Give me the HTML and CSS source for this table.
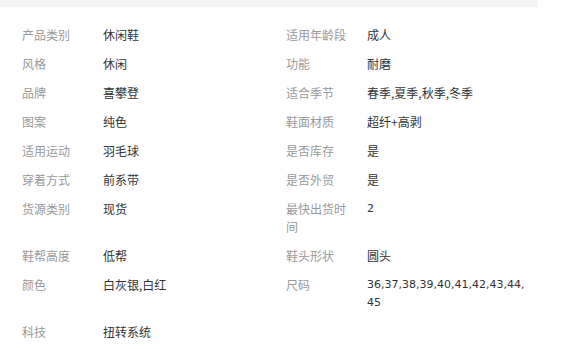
FILE: index.html
```html
<!DOCTYPE html>
<html lang="zh-CN">
<head>
<meta charset="utf-8">
<title>产品参数</title>
<link rel="stylesheet" href="styles.css">
</head>
<body>
<div class="topbar"></div>
<ul class="attrs">
  <li class="item"><span class="label">产品类别</span><span class="value">休闲鞋</span></li>
  <li class="item"><span class="label">适用年龄段</span><span class="value">成人</span></li>
  <li class="item"><span class="label">风格</span><span class="value">休闲</span></li>
  <li class="item"><span class="label">功能</span><span class="value">耐磨</span></li>
  <li class="item"><span class="label">品牌</span><span class="value">喜攀登</span></li>
  <li class="item"><span class="label">适合季节</span><span class="value">春季,夏季,秋季,冬季</span></li>
  <li class="item"><span class="label">图案</span><span class="value">纯色</span></li>
  <li class="item"><span class="label">鞋面材质</span><span class="value">超纤+高剥</span></li>
  <li class="item"><span class="label">适用运动</span><span class="value">羽毛球</span></li>
  <li class="item"><span class="label">是否库存</span><span class="value">是</span></li>
  <li class="item"><span class="label">穿着方式</span><span class="value">前系带</span></li>
  <li class="item"><span class="label">是否外贸</span><span class="value">是</span></li>
  <li class="item"><span class="label">货源类别</span><span class="value">现货</span></li>
  <li class="item"><span class="label">最快出货时间</span><span class="value num">2</span></li>
  <li class="item"><span class="label">鞋帮高度</span><span class="value">低帮</span></li>
  <li class="item"><span class="label">鞋头形状</span><span class="value">圆头</span></li>
  <li class="item"><span class="label">颜色</span><span class="value">白灰银,白红</span></li>
  <li class="item"><span class="label">尺码</span><span class="value num">36,<wbr>37,<wbr>38,<wbr>39,<wbr>40,<wbr>41,<wbr>42,<wbr>43,<wbr>44,<wbr>45</span></li>
  <li class="item"><span class="label">科技</span><span class="value">扭转系统</span></li>
</ul>
</body>
</html>
```
FILE: styles.css
```css
html, body {
  margin: 0;
  padding: 0;
  background: #fff;
}
body {
  font-family: "Noto Sans CJK SC", "DejaVu Sans", sans-serif;
  font-size: 12px;
  line-height: 18px;
}
.topbar {
  width: 538px;
  height: 7px;
  background: #f4f4f4;
}
.attrs {
  list-style: none;
  margin: 0;
  padding: 13px 0 0 22px;
  display: grid;
  grid-template-columns: 264px 264px;
}
.item {
  display: flex;
  align-items: flex-start;
  padding: 6px 0 5px;
}
.label {
  width: 62px;
  margin-right: 19px;
  color: #999;
  flex: none;
}
.value {
  width: 166px;
  color: #333;
}
.num {
  font-family: "DejaVu Sans", sans-serif;
  font-size: 11px;
}
```
